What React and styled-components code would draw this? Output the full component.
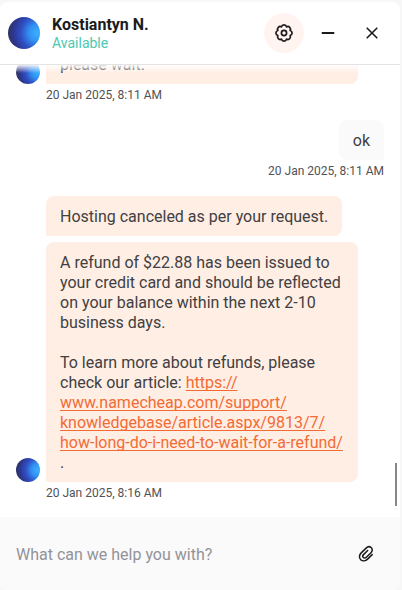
import React from "react";
import styled, { createGlobalStyle, css } from "styled-components";

const GlobalStyle = createGlobalStyle`
  *, *::before, *::after { box-sizing: border-box; }
  html, body, #root { height: 100%; }
  body {
    margin: 0;
    background: #f7f7f7;
    color: #414042;
    font-family: Roboto, "Liberation Sans", sans-serif;
    font-size: 16px;
    line-height: 20px;
  }
  button, input { font: inherit; color: inherit; }
`;

const Page = styled.div`
  height: 100%;
  min-height: 320px;
  padding: 2px 2px 0 0;
  overflow: hidden;
`;

const Panel = styled.section`
  display: flex;
  flex-direction: column;
  height: 100%;
  overflow: hidden;
  background: #fff;
  border-radius: 8px;
`;

const Header = styled.header`
  display: flex;
  align-items: center;
  gap: 12px;
  flex: none;
  height: 63px;
  padding: 0 8px;
  border-bottom: 1px solid #e3e3e3;
`;

const Avatar = styled.span`
  flex: none;
  width: ${(p) => (p.$large ? 32 : 24)}px;
  aspect-ratio: 1;
  border-radius: 50%;
  background: radial-gradient(circle at 92% 50%, #3cb0ff 0%, #3290f2 26%, #2f4fc4 50%, #2d3690 72%, #30343c 100%);
`;

const Agent = styled.div`
  flex: 1;
  min-width: 0;
`;

const AgentName = styled.h1`
  margin: 0;
  color: #1b1b1c;
  font-size: 16px;
  font-weight: 700;
  line-height: 20px;
`;

const AgentStatus = styled.p`
  margin: 0;
  color: #4cc9b0;
  font-size: 14px;
  line-height: 16px;
`;

const Actions = styled.div`
  display: flex;
  gap: 4px;
`;

const IconButton = styled.button`
  display: grid;
  place-items: center;
  flex: none;
  width: 40px;
  height: 40px;
  padding: 0;
  border: 0;
  border-radius: 50%;
  background: ${(p) => (p.$active ? "#fff4f0" : "transparent")};
  color: #1b1b1c;
  cursor: pointer;
`;

const Messages = styled.main`
  position: relative;
  display: flex;
  flex: 1;
  flex-direction: column;
  justify-content: flex-end;
  gap: 17px;
  min-height: 0;
  padding: 0 16px 16px;
  overflow: hidden;

  &::before {
    content: "";
    position: absolute;
    inset: 0 0 auto;
    height: 8px;
    background: linear-gradient(rgba(255, 255, 255, 0.9), rgba(255, 255, 255, 0));
    z-index: 1;
  }
`;

const ScrollThumb = styled.span`
  position: absolute;
  right: 3px;
  bottom: 11px;
  width: 2px;
  height: 43px;
  background: #85888a;
`;

const Group = styled.article`
  display: grid;
  grid-template-columns: 24px minmax(0, 312px);
  column-gap: 6px;
  row-gap: 3px;
  justify-content: start;
  align-items: end;
  flex: none;

  ${(p) =>
    p.$own &&
    css`
      grid-template-columns: auto;
      justify-content: end;
      justify-items: end;
    `}
`;

const Bubbles = styled.div`
  display: flex;
  flex-direction: column;
  align-items: flex-start;
  gap: 6px;
`;

const Bubble = styled.div`
  padding: 11px 14px 9px;
  background: ${(p) => (p.$own ? "#fafafa" : "#ffeee4")};
  border-radius: ${(p) => (p.$own ? "8px 8px 0 8px" : "8px 8px 8px 2px")};
  overflow-wrap: anywhere;
`;

const Paragraph = styled.p`
  margin: 0;

  & + & { margin-top: 20px; }
`;

const Link = styled.a`
  color: #f26b35;
  text-decoration: underline;
  text-decoration-thickness: 1px;
  text-decoration-skip-ink: none;
  text-underline-offset: 2px;
`;

const Timestamp = styled.time`
  grid-column: -2;
  color: #515154;
  font-size: 12px;
  line-height: 16px;
`;

const Composer = styled.form`
  display: flex;
  align-items: center;
  flex: none;
  height: 73px;
  padding: 0 14px 0 16px;
  background: #fafafa;
`;

const MessageInput = styled.input`
  flex: 1;
  min-width: 0;
  height: 40px;
  padding: 2px 0 0;
  border: 0;
  outline: 0;
  background: transparent;

  &::placeholder { color: #929299; opacity: 1; }
`;

const GearIcon = () => (
  <svg width="20" height="20" viewBox="0 0 20 20" fill="none" stroke="currentColor" strokeWidth="1.7" strokeLinejoin="round" aria-hidden="true">
    <path d="M7.47 3.9a2.6 2.6 0 0 1 5.06 0A2.6 2.6 0 0 1 16.1 7.47a2.6 2.6 0 0 1 0 5.06A2.6 2.6 0 0 1 12.53 16.1a2.6 2.6 0 0 1-5.06 0A2.6 2.6 0 0 1 3.9 12.53a2.6 2.6 0 0 1 0-5.06A2.6 2.6 0 0 1 7.47 3.9Z" />
    <circle cx="10" cy="10" r="2.6" />
  </svg>
);

const MinimizeIcon = () => (
  <svg width="20" height="20" viewBox="0 0 20 20" stroke="currentColor" strokeWidth="2" strokeLinecap="round" aria-hidden="true">
    <path d="M4.5 10h11" />
  </svg>
);

const CloseIcon = () => (
  <svg width="20" height="20" viewBox="0 0 20 20" stroke="currentColor" strokeWidth="1.6" strokeLinecap="round" aria-hidden="true">
    <path d="m5.2 5.2 9.6 9.6m0-9.6-9.6 9.6" />
  </svg>
);

const ClipIcon = () => (
  <svg width="20" height="20" viewBox="0 0 20 20" fill="none" stroke="currentColor" strokeWidth="1.5" strokeLinecap="round" strokeLinejoin="round" aria-hidden="true">
    <path d="m16.2 10.6-4.6 4.5c-2 2-5 2.4-6.9.6s-1.5-4.8.5-6.8l4.9-4.8c1.5-1.5 3.8-1.7 5.2-.4s1.2 3.5-.3 5l-4.7 4.6c-.9.9-2.2 1-3 .2s-.7-2 .2-2.9l4.2-4.1" />
  </svg>
);

export default function App() {
  return (
    <>
      <GlobalStyle />
      <Page>
        <Panel aria-label="Support chat">
          <Header>
            <Avatar $large />
            <Agent>
              <AgentName>Kostiantyn N.</AgentName>
              <AgentStatus>Available</AgentStatus>
            </Agent>
            <Actions>
              <IconButton type="button" aria-label="Settings" $active><GearIcon /></IconButton>
              <IconButton type="button" aria-label="Minimize"><MinimizeIcon /></IconButton>
              <IconButton type="button" aria-label="Close"><CloseIcon /></IconButton>
            </Actions>
          </Header>

          <Messages>
            <Group>
              <Avatar />
              <Bubble>please wait.</Bubble>
              <Timestamp>20 Jan 2025, 8:11 AM</Timestamp>
            </Group>

            <Group $own>
              <Bubble $own>ok</Bubble>
              <Timestamp>20 Jan 2025, 8:11 AM</Timestamp>
            </Group>

            <Group>
              <Avatar />
              <Bubbles>
                <Bubble>Hosting canceled as per your request.</Bubble>
                <Bubble>
                  <Paragraph>
                    A refund of $22.88 has been issued to your credit card and should be reflected on your
                    balance within the next 2-10 business days.
                  </Paragraph>
                  <Paragraph>
                    To learn more about refunds, please check our article:{" "}
                    <Link href="https://www.namecheap.com/support/knowledgebase/article.aspx/9813/7/how-long-do-i-need-to-wait-for-a-refund/">
                      https://<wbr />www.namecheap.com/support/<wbr />knowledgebase/article.aspx/9813/7/<wbr />how-long-do-i-need-to-wait-for-a-refund/
                    </Link>
                    <br />.
                  </Paragraph>
                </Bubble>
              </Bubbles>
              <Timestamp>20 Jan 2025, 8:16 AM</Timestamp>
            </Group>
            <ScrollThumb />
          </Messages>

          <Composer>
            <MessageInput type="text" aria-label="Message" placeholder="What can we help you with?" />
            <IconButton type="button" aria-label="Attach a file"><ClipIcon /></IconButton>
          </Composer>
        </Panel>
      </Page>
    </>
  );
}
